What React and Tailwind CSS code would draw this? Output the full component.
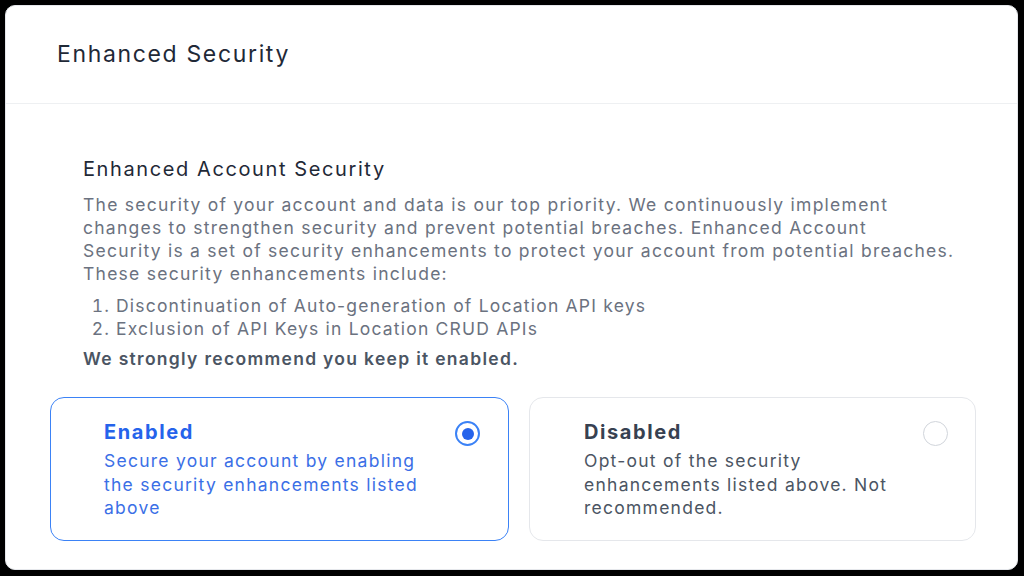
import React from "react";

export default function App() {
  return (
    <div className="w-[1024px] h-[576px] bg-black pt-[5px] pl-[5px] pr-[6px] pb-[6px]" style={{ fontFamily: "Inter, 'Noto Sans', sans-serif" }}>
      <div className="h-full bg-white rounded-[10px] border border-[#e5e7eb] flex flex-col overflow-hidden">
        <div className="h-[98px] shrink-0 border-b border-[#eef0f2] flex items-center pl-[51px]">
          <h1 className="text-[23px] tracking-[1.65px] text-[#1f2937] font-normal">Enhanced Security</h1>
        </div>
        <div className="px-[44px] pt-[53px] flex flex-col">
          <div className="pl-[33px]">
            <h2 className="text-[20px] leading-[24px] tracking-[1.6px] text-[#1f2937] font-normal">Enhanced Account Security</h2>
            <p className="mt-[12px] text-[17.5px] leading-[23px] tracking-[1.25px] text-[#6b7280] whitespace-nowrap">
              The security of your account and data is our top priority. We continuously implement<br />
              changes to strengthen security and prevent potential breaches. Enhanced Account<br />
              Security is a set of security enhancements to protect your account from potential breaches.<br />
              These security enhancements include:
            </p>
            <ol className="mt-[9px] pl-[33px] text-[17.5px] leading-[23px] tracking-[1.2px] text-[#6b7280] list-decimal">
              <li>Discontinuation of Auto-generation of Location API keys</li>
              <li>Exclusion of API Keys in Location CRUD APIs</li>
            </ol>
            <p className="mt-[7px] text-[17.5px] leading-[23px] tracking-[1.3px] text-[#4b5563] font-semibold">We strongly recommend you keep it enabled.</p>
          </div>
          <div className="mt-[27px] flex gap-[20px]">
            <div className="w-[459px] h-[144px] shrink-0 rounded-[14px] border-[1.5px] border-[#3b82f6] flex pl-[53px] pr-[28px] pt-[22px]">
              <div className="flex-1">
                <div className="text-[20px] leading-[24px] tracking-[1.6px] font-bold text-[#2563eb]">Enabled</div>
                <div className="mt-[5px] text-[17.5px] leading-[23.5px] tracking-[1.25px] text-[#3b6fe6] w-[330px]">Secure your account by enabling the security enhancements listed above</div>
              </div>
              <div className="mt-[1px] w-[25px] h-[25px] rounded-full border-[2.5px] border-[#3b82f6] flex items-center justify-center">
                <div className="w-[12px] h-[12px] rounded-full bg-[#2563eb]" />
              </div>
            </div>
            <div className="w-[447px] h-[144px] shrink-0 rounded-[14px] border border-[#e5e7eb] flex pl-[54px] pr-[27px] pt-[22px]">
              <div className="flex-1">
                <div className="text-[20px] leading-[24px] tracking-[1.6px] font-bold text-[#374151]">Disabled</div>
                <div className="mt-[5px] text-[17.5px] leading-[23.5px] tracking-[1.25px] text-[#4b5563] w-[320px]">Opt-out of the security enhancements listed above. Not recommended.</div>
              </div>
              <div className="mt-[1px] w-[25px] h-[25px] rounded-full border border-[#d1d5db]" />
            </div>
          </div>
        </div>
      </div>
    </div>
  );
}
